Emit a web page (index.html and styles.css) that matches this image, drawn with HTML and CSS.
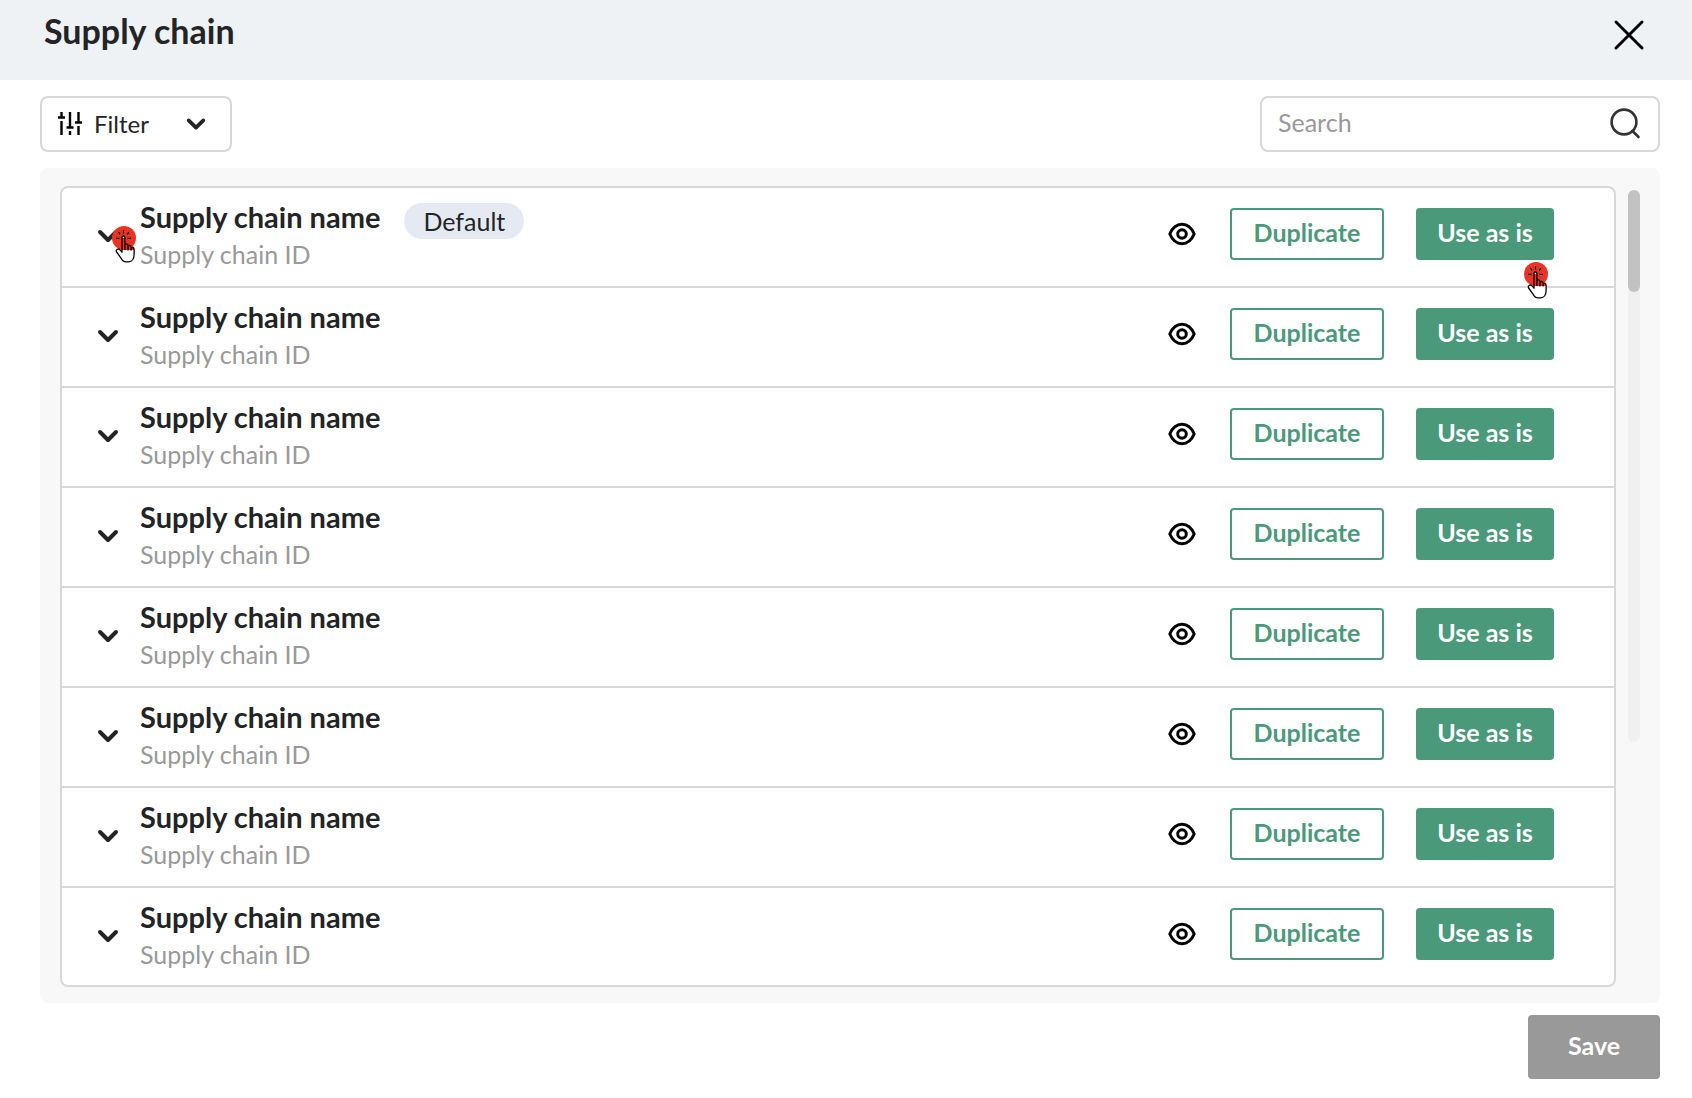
FILE: index.html
```
<!DOCTYPE html>
<html lang="en">
<head>
    <meta charset="UTF-8">
    <meta name="viewport" content="width=device-width, initial-scale=1.0">
    <title>Supply chain</title>
    <link rel="stylesheet" href="styles.css">
</head>
<body>
    <!-- shared icons -->
    <svg class="sprite" aria-hidden="true">
        <symbol id="chevron" viewBox="0 0 24 24">
            <path d="M4 8l8 8 8-8" fill="none" stroke="currentColor" stroke-width="4" stroke-linecap="round" stroke-linejoin="round"/>
        </symbol>
        <symbol id="eye" viewBox="0 0 28 24">
            <path d="M1.800 12C4.600 5.400 8.900 2.300 14 2.300S23.400 5.400 26.200 12C23.400 18.600 19.100 21.700 14 21.700S4.600 18.600 1.800 12z" fill="none" stroke="currentColor" stroke-width="3" stroke-linejoin="round"/>
            <circle cx="14" cy="12" r="4.300" fill="none" stroke="currentColor" stroke-width="3"/>
        </symbol>
        <symbol id="tap" viewBox="0 0 24 38">
            <circle cx="12" cy="12" r="12" fill="#ea3323"/>
            <path d="M5 23.500c1.200-.8 2.700-.3 3.700 1.100l1.300 1.600V11.500c0-2 2.900-2 2.900 0v7.300c.5-1.500 2.900-1.300 3.100.5v.8c.8-1 2.900-.7 3.100.9v.9c1-.9 2.900-.3 3 1.300v5.300c0 4-1.900 7.400-5.600 7.400h-2.200c-2.700 0-4.300-1.400-5.300-3.800z" fill="#fff"/>
            <path d="M9.500 24h12.600V21L19 19l-6-1.500V12h-3.200z" fill="#ea3323"/>
            <path d="M5 23.500c1.200-.8 2.700-.3 3.700 1.100l1.300 1.600V11.500c0-2 2.900-2 2.900 0v7.300c.5-1.500 2.900-1.300 3.100.5v.8c.8-1 2.900-.7 3.100.9v.9c1-.9 2.900-.3 3 1.300v5.300c0 4-1.900 7.400-5.600 7.400h-2.200c-2.700 0-4.300-1.400-5.300-3.800L4.600 26c-.6-1.100-.4-2 .4-2.500zM12.900 18v6M16 19.500v5M19.100 21v3.500" fill="none" stroke="#000" stroke-width="1.300" stroke-linejoin="round"/>
            <path d="M11.500 4v3.500M6.500 6l1.600 2.300M17 6l-1.800 2.300M4 12.300h3.500M15.500 12.300h3.500" fill="none" stroke="#000" stroke-width="1.200"/>
        </symbol>
    </svg>

    <header class="header">
        <h1 class="header-title">Supply chain</h1>
        <button class="icon-button" aria-label="Close">
            <svg class="icon-close" viewBox="0 0 32 32"><path d="M3 3l26 26M29 3L3 29" fill="none" stroke="currentColor" stroke-width="3" stroke-linecap="round"/></svg>
        </button>
    </header>

    <main class="content">
        <div class="toolbar">
            <button class="filter-button">
                <svg class="icon-filter" viewBox="0 0 24 24"><path d="M3.500 0v5M0 5.500h7M3.500 9v14M12 0v15.500M8.500 15.500h7M12 19v4M20.500 0v10.500M17 10.500h7M20.500 14v9" fill="none" stroke="currentColor" stroke-width="2.400"/></svg>
                <span class="filter-label">Filter</span>
                <svg class="icon-chevron-small"><use href="#chevron"/></svg>
            </button>
            <label class="search">
                <input class="search-input" type="text" placeholder="Search" aria-label="Search">
                <svg class="icon-search" viewBox="0 0 32 32"><circle cx="15" cy="14" r="12.400" fill="none" stroke="currentColor" stroke-width="2.600"/><path d="M23.500 23l6 6" stroke="currentColor" stroke-width="2.600" stroke-linecap="round"/></svg>
            </label>
        </div>

        <section class="panel">
            <ul class="chain-list" id="chain-list"></ul>
            <div class="scrollbar"><div class="scrollbar-thumb"></div></div>
        </section>

        <footer class="footer">
            <button class="save-button">Save</button>
        </footer>
    </main>

    <script>
        const list = document.getElementById('chain-list');
        const tap = '<svg class="tap"><use href="#tap"/></svg>';

        for (let i = 0; i < 8; i++) {
            const first = i === 0;
            const row = document.createElement('li');
            row.className = 'chain-row';
            row.innerHTML = `
                <button class="toggle" aria-label="Expand">
                    <svg class="icon-chevron"><use href="#chevron"/></svg>
                    ${first ? tap : ''}
                </button>
                <div class="chain-info">
                    <div class="chain-heading">
                        <h2 class="chain-name">Supply chain name</h2>
                        ${first ? '<span class="badge">Default</span>' : ''}
                    </div>
                    <p class="chain-id">Supply chain ID</p>
                </div>
                <div class="chain-actions">
                    <button class="icon-button" aria-label="View"><svg class="icon-eye"><use href="#eye"/></svg></button>
                    <button class="button button-outline">Duplicate</button>
                    <button class="button button-solid">Use as is${first ? tap : ''}</button>
                </div>
            `;
            list.appendChild(row);
        }
    </script>
</body>
</html>
```
FILE: styles.css
```
:root {
    --green: #4a997a;
    --text: #222425;
    --muted: #999;
    --border: #d8d8d8;
}

* {
    margin: 0;
    padding: 0;
    box-sizing: border-box;
}

body {
    font-family: Lato, sans-serif;
    font-size: 25px;
    line-height: 36px;
    color: var(--text);
    background: #fff;
}

button,
input {
    font: inherit;
    color: inherit;
    border: none;
    background: none;
}

button {
    cursor: pointer;
}

svg {
    display: block;
    flex: none;
}

.sprite {
    position: absolute;
    width: 0;
    height: 0;
}

.header {
    display: flex;
    align-items: flex-start;
    justify-content: space-between;
    height: 80px;
    padding: 13px 47px 0 44px;
    background: #eef2f5;
}

.header-title {
    font-size: 34px;
    font-weight: 700;
}

.icon-button {
    color: #000;
}

.icon-close {
    width: 32px;
    height: 32px;
    margin-top: 6px;
}

.content {
    padding: 16px 32px 20px 40px;
}

.toolbar {
    display: flex;
    justify-content: space-between;
    margin-bottom: 16px;
}

.filter-button {
    display: flex;
    align-items: center;
    width: 192px;
    height: 56px;
    padding: 0 23px 0 16px;
    border: 2px solid var(--border);
    border-radius: 8px;
}

.icon-filter {
    width: 24px;
    height: 24px;
    margin-right: 12px;
    color: #000;
}

.filter-label {
    flex: 1;
    font-size: 24px;
    text-align: left;
}

.icon-chevron {
    width: 24px;
    height: 24px;
}

.icon-chevron-small {
    width: 22px;
    height: 22px;
}

.search {
    display: flex;
    align-items: center;
    width: 400px;
    height: 56px;
    padding: 0 17px 0 16px;
    border: 2px solid var(--border);
    border-radius: 8px;
}

.search-input {
    flex: 1;
    min-width: 0;
    padding-bottom: 4px;
    outline: none;
}

.search-input::placeholder {
    color: var(--muted);
    opacity: 1;
}

.icon-search {
    width: 32px;
    height: 32px;
    color: #333;
}

.panel {
    display: flex;
    gap: 12px;
    padding: 18px 20px 16px;
    border-radius: 8px;
    background: #f8f8f8;
}

.chain-list {
    flex: 1;
    list-style: none;
    border: 2px solid var(--border);
    border-radius: 8px;
    background: #fff;
}

.chain-row {
    display: flex;
    align-items: center;
    height: 100px;
    padding: 0 60px 6px 34px;
    border-bottom: 2px solid var(--border);
}

.chain-row:last-child {
    height: 97px;
    border-bottom: none;
}

.toggle {
    position: relative;
    padding-top: 4px;
    margin-right: 20px;
}

.chain-info {
    flex: 1;
    padding-top: 4px;
}

.chain-heading {
    display: flex;
    align-items: flex-start;
    gap: 24px;
    height: 36px;
}

.chain-name {
    font-size: 29px;
    font-weight: 700;
}

.badge {
    padding: 0 19px;
    margin-top: 4px;
    border-radius: 18px;
    background: #e5eaf2;
}

.chain-id {
    line-height: 38px;
    color: var(--muted);
}

.chain-actions {
    display: flex;
    align-items: center;
    gap: 32px;
}

.icon-eye {
    width: 28px;
    height: 24px;
    margin-right: 2px;
}

.button {
    position: relative;
    height: 52px;
    padding-bottom: 4px;
    border: 2px solid var(--green);
    border-radius: 4px;
    font-weight: 700;
}

.button-outline {
    width: 154px;
    color: var(--green);
}

.button-solid {
    width: 138px;
    color: #fff;
    background: var(--green);
}

/* tap hint */
.tap {
    position: absolute;
    width: 24px;
    height: 38px;
}

.toggle .tap {
    top: 6px;
    left: 16px;
}

.button .tap {
    top: 52px;
    right: 4px;
}

.scrollbar {
    width: 12px;
    height: 552px;
    margin-top: 4px;
    border-radius: 6px;
    background: #f0f0f0;
}

.scrollbar-thumb {
    height: 102px;
    border-radius: 6px;
    background: #c2c2c2;
}

.footer {
    display: flex;
    justify-content: flex-end;
    padding-top: 12px;
}

.save-button {
    width: 132px;
    height: 64px;
    padding-bottom: 4px;
    border-radius: 4px;
    font-weight: 700;
    color: #fff;
    background: #999;
}
```
